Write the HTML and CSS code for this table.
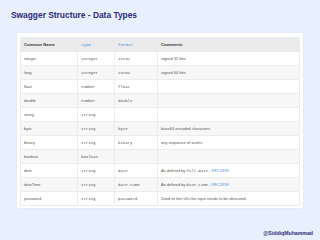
FILE: index.html
```html
<!DOCTYPE html>
<html lang="en">
  <head>
    <meta charset="UTF-8" />
    <title>Swagger Structure - Data Types</title>
    <link rel="stylesheet" href="styles.css">
  </head>
  <body>
    <h1 class="title">Swagger Structure - Data Types</h1>

    <div class="card">
      <table class="types">
        <thead>
          <tr>
            <th>Common Name</th>
            <th class="code link">type</th>
            <th class="code link">format</th>
            <th>Comments</th>
          </tr>
        </thead>
        <tbody>
          <tr><td>integer</td><td class="code">integer</td><td class="code">int32</td><td>signed 32 bits</td></tr>
          <tr><td>long</td><td class="code">integer</td><td class="code">int64</td><td>signed 64 bits</td></tr>
          <tr><td>float</td><td class="code">number</td><td class="code">float</td><td></td></tr>
          <tr><td>double</td><td class="code">number</td><td class="code">double</td><td></td></tr>
          <tr><td>string</td><td class="code">string</td><td></td><td></td></tr>
          <tr><td>byte</td><td class="code">string</td><td class="code">byte</td><td>base64 encoded characters</td></tr>
          <tr><td>binary</td><td class="code">string</td><td class="code">binary</td><td>any sequence of octets</td></tr>
          <tr><td>boolean</td><td class="code">boolean</td><td></td><td></td></tr>
          <tr><td>date</td><td class="code">string</td><td class="code">date</td><td>As defined by <span class="code">full-date</span> - <a href="#">RFC3339</a></td></tr>
          <tr><td>dateTime</td><td class="code">string</td><td class="code">date-time</td><td>As defined by <span class="code">date-time</span> - <a href="#">RFC3339</a></td></tr>
          <tr><td>password</td><td class="code">string</td><td class="code">password</td><td>Used to hint UIs the input needs to be obscured.</td></tr>
        </tbody>
      </table>
    </div>

    <p class="handle">@SiddiqMuhammad</p>
  </body>
</html>
```

FILE: styles.css
```css
body {
  margin: 0;
  padding: 0;
  font-family: "Liberation Sans", Arial, sans-serif;
  background: #e9f0fd;
  color: #333;
}
.title {
  margin: 0;
  padding: 9px 11px 0;
  font-size: 8.4px;
  line-height: 12px;
  font-weight: bold;
  color: #2d2a78;
}
.card {
  background: #fff;
  margin: 12px 17px 0;
  padding: 4px 3px 2px;
  box-shadow: 0 0 2px rgba(0, 0, 0, 0.06);
}
.types {
  width: 100%;
  border-collapse: collapse;
  table-layout: fixed;
  font-size: 4px;
  color: #555;
}
.types th,
.types td {
  height: 13px;
  padding: 0 3px;
  text-align: left;
  border: 1px solid #ececec;
  white-space: nowrap;
  overflow: hidden;
}
.types th:nth-child(1) { width: 50px; }
.types th:nth-child(2) { width: 30px; }
.types th:nth-child(3) { width: 36px; }
.types th {
  background: #ebebeb;
  color: #333;
  font-weight: bold;
  font-size: 4.2px;
}
.types tbody tr:nth-child(even) td {
  background: #f7f7f7;
}
.code {
  font-family: "Liberation Mono", monospace;
}
.types th.link {
  color: #4a90d9;
  font-weight: normal;
}
.types a {
  color: #4a90d9;
  text-decoration: none;
}
.handle {
  margin: 22px 7px 0;
  text-align: right;
  font-size: 5.2px;
  font-weight: bold;
  color: #2d2a78;
}
```
